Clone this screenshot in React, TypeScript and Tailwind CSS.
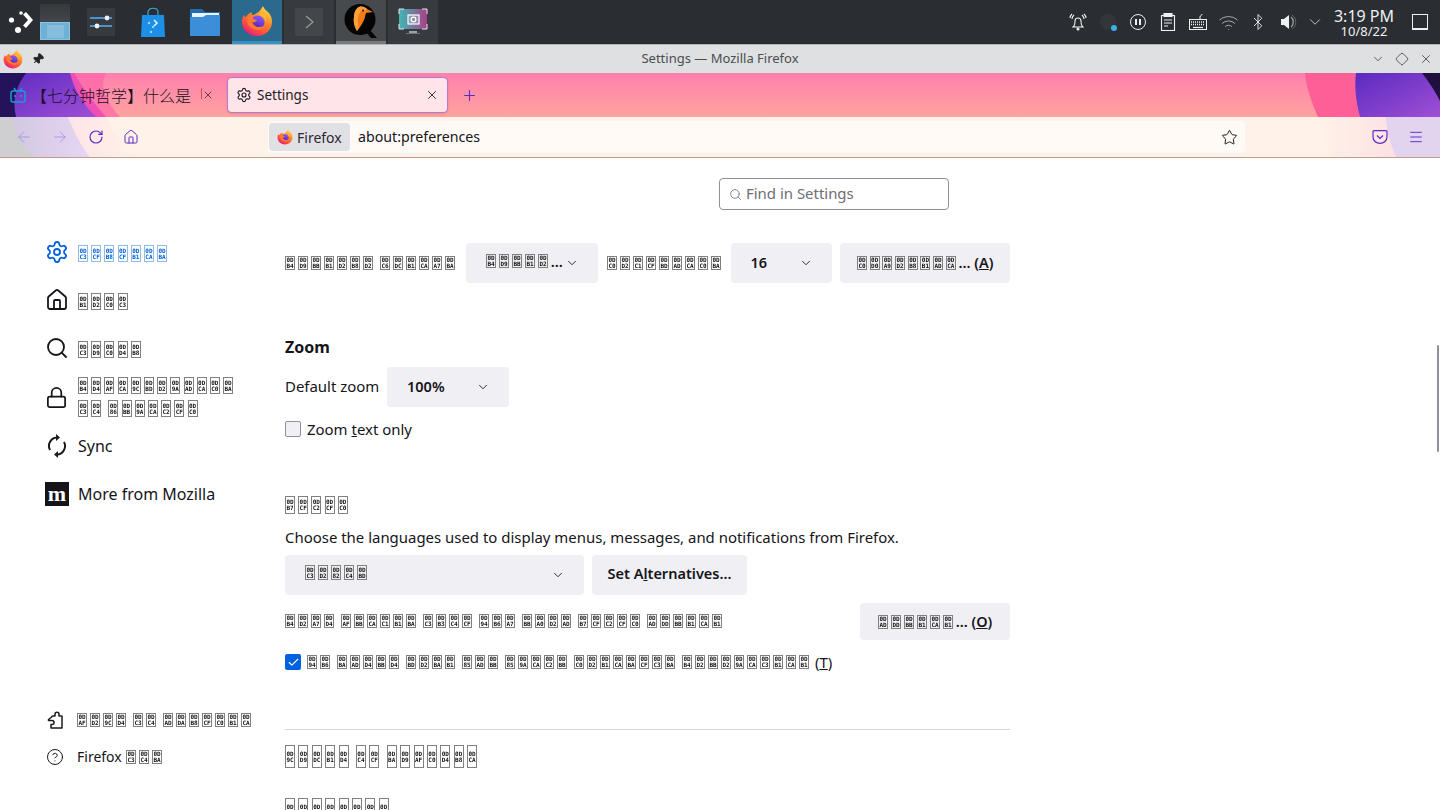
import {
  ArrowLeft,
  ArrowRight,
  Bluetooth,
  Check,
  ChevronDown,
  CircleHelp,
  Diamond,
  Home,
  Lock,
  Menu,
  Pin,
  Plus,
  RotateCw,
  Search,
  Settings,
  Star,
  Wifi,
  X,
} from 'lucide-react';

function FirefoxLogo({ size }: { size: number }) {
  return (
    <svg width={size} height={size} viewBox="0 0 32 32">
      <defs>
        <linearGradient id="ff-body" x1="0.8" y1="0.1" x2="0.25" y2="1">
          <stop offset="0" stopColor="#ffd13d" />
          <stop offset="0.35" stopColor="#ff8a2b" />
          <stop offset="0.7" stopColor="#ff4f3f" />
          <stop offset="1" stopColor="#e31587" />
        </linearGradient>
        <linearGradient id="ff-core" x1="0.7" y1="0" x2="0.3" y2="1">
          <stop offset="0" stopColor="#9059ff" />
          <stop offset="1" stopColor="#4b1fa8" />
        </linearGradient>
      </defs>
      <path
        d="M22 1c1 3 3 4 5 6 3 3 4 6 4 10 0 8-7 14-15 14S1 25 1 17c0-3 1-6 2-7 0 1 1 2 2 2 1-2 3-4 6-5-1 2 0 3 1 3 3-1 7-3 10-9z"
        fill="url(#ff-body)"
      />
      <circle cx="16.5" cy="17.5" r="7" fill="url(#ff-core)" />
      <path
        d="M6 16c1 6 6 9 11 9 5 0 9-4 9-8 0 0-2 5-8 5-4 0-6-3-7-5 2 1 4 0 5-2-3 0-6-3-5-6-3 1-5 4-5 7z"
        fill="#ff7a2e"
      />
      <path d="M20 7c4 2 6 6 5 11-1-4-3-7-7-8z" fill="#ffb52e" />
    </svg>
  );
}

function KickoffIcon() {
  return (
    <svg width="26" height="26" viewBox="0 0 26 26" fill="#fff">
      <circle cx="14" cy="4" r="1.8" />
      <circle cx="4.5" cy="11" r="2.6" />
      <circle cx="11" cy="21" r="3" />
      <path d="M15 4.5l3-2.500 7 8-7 8-3-2.500 5-5.500z" transform="translate(1 1)" />
    </svg>
  );
}

function PagerIcon() {
  return (
    <div className="flex h-[36px] w-[30px] flex-col">
      <div className="h-[18px] bg-gradient-to-b from-[#36393c] to-[#44474a]" />
      <div className="flex h-[18px] justify-center border border-[#8ac4e4] bg-[#6fb0d6]">
        <div className="mt-[2px] h-[13px] w-[17px] bg-[#86bcdc]" />
      </div>
    </div>
  );
}

function SlidersIcon() {
  return (
    <svg width="28" height="28" viewBox="0 0 28 28">
      <rect width="28" height="28" rx="1" fill="#383b3e" />
      <rect x="3" y="9" width="22" height="2" fill="#4a93d0" />
      <rect x="3" y="17" width="22" height="2" fill="#4a93d0" />
      <circle cx="20" cy="10" r="2.400" fill="#f2f2f2" />
      <circle cx="10" cy="18" r="2.400" fill="#f2f2f2" />
    </svg>
  );
}

function DiscoverIcon() {
  return (
    <svg width="26" height="30" viewBox="0 0 26 30">
      <path d="M8 8V5c0-5 10-5 10 0v3" fill="none" stroke="#3fa6d8" strokeWidth="1.200" />
      <path d="M2 8h22l1 22H1z" fill="#1d8fe6" />
      <circle cx="13" cy="20" r="1" fill="#cfeaff" />
      <path d="M14 13l3 3-3 3" fill="none" stroke="#e6f6ff" strokeWidth="1.500" />
      <circle cx="9" cy="16" r="1" fill="#cfeaff" />
      <circle cx="11" cy="25" r="1" fill="#cfeaff" />
    </svg>
  );
}

function FolderIcon() {
  return (
    <svg width="30" height="28" viewBox="0 0 30 28">
      <path d="M0 1h12l3 3h15v24H0z" fill="#1f6cb0" />
      <rect x="2" y="5" width="27" height="5" fill="#eaf3fb" />
      <path d="M0 9h13l3-2h14v21H0z" fill="#3c8ed8" />
    </svg>
  );
}

function TerminalTile() {
  return (
    <svg width="28" height="28" viewBox="0 0 28 28">
      <rect width="28" height="28" rx="1" fill="#43474a" />
      <path d="M11 8l7 6-7 6" fill="none" stroke="#9a9c9e" strokeWidth="1.200" />
    </svg>
  );
}

function QemuIcon() {
  return (
    <svg width="34" height="34" viewBox="0 0 34 34">
      <circle cx="16" cy="15.500" r="15.500" fill="#050505" />
      <path d="M26 26l7 8h-6l-6-7z" fill="#050505" />
      <path
        d="M15 3c3-1 6 0 8 2l6 3-7 1c-1 3-1 6-3 9-2 4-4 6-6 9-2-4-4-8-3-14 0-4 2-9 5-10z"
        fill="#f07a14"
      />
      <path d="M15 3c3-1 6 0 8 2l-2 2c-3-1-5 0-6 3-1 4-2 8 0 13l-2 4c-2-4-4-8-3-14 0-4 2-9 5-10z" fill="#f9a03c" />
      <circle cx="19" cy="6.500" r="1" fill="#111" />
    </svg>
  );
}

function ScreenshotIcon() {
  return (
    <svg width="30" height="28" viewBox="0 0 30 28">
      <defs>
        <linearGradient id="shot-bg" x1="0" y1="0" x2="1" y2="0">
          <stop offset="0" stopColor="#3fb8b4" />
          <stop offset="1" stopColor="#a83f88" />
        </linearGradient>
      </defs>
      <rect x="1" y="1" width="28" height="20" fill="url(#shot-bg)" />
      <rect x="10" y="7" width="11" height="9" fill="#ffffff33" stroke="#fff" strokeWidth="1.200" />
      <circle cx="15.500" cy="11.500" r="2.400" fill="none" stroke="#fff" strokeWidth="1.200" />
      <path d="M1 6V1h5M24 1h5v5M29 16v5h-5M6 21H1v-5" stroke="#e6e6e6" fill="none" />
      <rect x="11" y="23" width="8" height="2" fill="#a0a3a5" />
      <rect x="8" y="25" width="14" height="1" fill="#707376" />
    </svg>
  );
}

function AlarmIcon() {
  return (
    <svg width="18" height="18" viewBox="0 0 18 18" fill="none" stroke="#eff0f1" strokeWidth="1.100">
      <path d="M5 13c1-1 1-3 1-5a3 3 0 0 1 6 0c0 2 0 4 1 5l1 1H4z" />
      <circle cx="9" cy="16" r="1" fill="#eff0f1" />
      <path d="M3 6c0-2 1-3 2-4M1 5c0-1 1-3 2-4M15 6c0-2-1-3-2-4M17 5c0-1-1-3-2-4" />
    </svg>
  );
}

function ClipboardIcon() {
  return (
    <svg width="16" height="18" viewBox="0 0 16 18" fill="none" stroke="#eff0f1" strokeWidth="1.100">
      <rect x="1.500" y="2.500" width="13" height="15" />
      <rect x="4" y="0.500" width="8" height="3" fill="#eff0f1" />
      <path d="M4 7h8M4 10h8M4 13h4" />
    </svg>
  );
}

function KeyboardIcon() {
  return (
    <svg width="20" height="18" viewBox="0 0 20 18" fill="none" stroke="#eff0f1" strokeWidth="1">
      <rect x="1.500" y="6.500" width="17" height="10" />
      <path d="M12 6V4c0-2 2-1 2-3" />
      <path d="M3 9h14M3 11.500h14" strokeDasharray="1 1" strokeWidth="1.400" />
      <path d="M5 14.500h10" strokeWidth="1.200" />
    </svg>
  );
}

function VolumeIcon() {
  return (
    <svg width="17" height="16" viewBox="0 0 17 16">
      <path d="M1 5h3l5-4v14l-5-4H1z" fill="#eff0f1" />
      <path d="M11 3c3 2 3 8 0 10" fill="none" stroke="#a9acaf" strokeWidth="1.200" />
      <path d="M12 1c5 3 5 11 0 14" fill="none" stroke="#5e6266" strokeWidth="1" />
    </svg>
  );
}

function SyncIcon() {
  return (
    <svg width="24" height="24" viewBox="0 0 24 24" fill="none" stroke="#1b1b1f" strokeWidth="2">
      <path d="M5 16a8.500 8.500 0 0 1 7-12.500" />
      <path d="M19 8a8.500 8.500 0 0 1-7 12.500" />
      <path d="M11 0l4 3.500-4 3.500zM13 17l-4 3.500 4 3.500z" fill="#1b1b1f" stroke="none" />
    </svg>
  );
}

function PocketIcon() {
  return (
    <svg width="16" height="16" viewBox="0 0 16 16" fill="none" stroke="#5b2bc8" strokeWidth="1.200">
      <path d="M2 1.700h12c.6 0 1 .4 1 1V8c0 3.500-3 6.300-7 6.300S1 11.500 1 8V2.700c0-.6.4-1 1-1z" />
      <path d="M5 6.500l3 3 3-3" />
    </svg>
  );
}

function PuzzleIcon() {
  return (
    <svg width="18" height="18" viewBox="0 0 18 18" fill="none" stroke="#1b1b1f" strokeWidth="1.500" strokeLinejoin="round">
      <path d="M6.500 5H9V3.300a2 2 0 0 1 4 0V5h3v12H5v-3.500h1a2 2 0 0 0 0-4H2.500V8.500L5 6.500z" />
    </svg>
  );
}

function BiliIcon() {
  return (
    <svg width="16" height="16" viewBox="0 0 16 16" fill="none" stroke="#1a9ad6" strokeWidth="1.500">
      <rect x="1" y="4" width="14" height="11" rx="2" />
      <path d="M4 1l2 3M12 1l-2 3M5 8v2M11 8v2" />
    </svg>
  );
}

// Sinhala text has no font on the reference machine, so each code point shows as a hex box
function Tofu({
  text,
  h = 'h-[14px]',
  gap = 'mr-[3px]',
  blue,
}: {
  text: string;
  h?: string;
  gap?: string;
  blue?: boolean;
}) {
  return (
    <span aria-label={text} className="inline-flex items-center align-middle will-change-transform">
      {Array.from(text).map((ch, i) => {
        if (ch === ' ') return <span key={i} className="w-[4px]" />;
        const code = ch.codePointAt(0)!.toString(16).toUpperCase().padStart(4, '0');
        return (
          <span
            key={i}
            className={`flex w-[10px] shrink-0 flex-col items-center justify-center border font-['DejaVu_Sans_Mono',monospace] text-[6px] leading-[6px] font-bold ${h} ${gap} ${
              blue ? 'border-[#8fbce8] text-[#0061e0]' : 'border-[#808080] text-[#111111]'
            }`}
          >
            <span>{code.slice(0, 2)}</span>
            <span>{code.slice(2)}</span>
          </span>
        );
      })}
    </span>
  );
}

function TrayItem({ children, w = 'w-[30px]' }: { children: React.ReactNode; w?: string }) {
  return <div className={`flex h-full items-center justify-center ${w}`}>{children}</div>;
}

function Panel() {
  return (
    <div className="flex h-[45px] shrink-0 items-center border-b border-[#b4b6b8] bg-[#2a2e32]">
      <div className="flex h-full w-[40px] items-center justify-center">
        <KickoffIcon />
      </div>
      <div className="mr-[6px] flex h-full w-[30px] items-center">
        <PagerIcon />
      </div>
      <div className="flex h-full gap-[2px]">
        <div className="flex h-full w-[50px] items-center justify-center"><SlidersIcon /></div>
        <div className="flex h-full w-[50px] items-center justify-center"><DiscoverIcon /></div>
        <div className="flex h-full w-[50px] items-center justify-center"><FolderIcon /></div>
        <div className="flex h-full w-[50px] items-center justify-center border-b-[3px] border-[#3a8fc4] bg-[#2b6a8c]">
          <FirefoxLogo size={32} />
        </div>
        <div className="flex h-full w-[50px] items-center justify-center bg-[#373b3f]"><TerminalTile /></div>
        <div className="flex h-full w-[50px] items-center justify-center border-b-[3px] border-[#787a7c] bg-[#474a4d]">
          <QemuIcon />
        </div>
        <div className="flex h-full w-[50px] items-center justify-center bg-[#373b3f]"><ScreenshotIcon /></div>
      </div>
      <div className="ml-auto flex h-full items-center text-[#eff0f1]">
        <TrayItem><AlarmIcon /></TrayItem>
        <TrayItem>
          <div className="relative h-[16px] w-[16px] rounded-full bg-[#32363a]">
            <div className="absolute right-[-1px] bottom-[-1px] h-[6px] w-[6px] rounded-full bg-[#3daee9]" />
          </div>
        </TrayItem>
        <TrayItem>
          <div className="flex h-[16px] w-[16px] items-center justify-center gap-[2px] rounded-full border border-[#eff0f1]">
            <div className="h-[6px] w-[2px] bg-[#eff0f1]" />
            <div className="h-[6px] w-[2px] bg-[#eff0f1]" />
          </div>
        </TrayItem>
        <TrayItem><ClipboardIcon /></TrayItem>
        <TrayItem><KeyboardIcon /></TrayItem>
        <TrayItem><Wifi size={21} strokeWidth={1} className="text-[#b9bbbd]" /></TrayItem>
        <TrayItem><Bluetooth size={18} strokeWidth={1.200} /></TrayItem>
        <TrayItem><VolumeIcon /></TrayItem>
        <TrayItem w="w-[24px]"><ChevronDown size={18} strokeWidth={1} /></TrayItem>
        <div className="ml-[2px] flex w-[70px] flex-col items-center font-['Noto_Sans',sans-serif] text-[#eff0f1]">
          <span className="text-[16px] leading-[18px]">3:19 PM</span>
          <span className="text-[13px] leading-[13px]">10/8/22</span>
        </div>
        <div className="flex w-[41px] items-center justify-center">
          <div className="h-[16px] w-[16px] border border-b-2 border-[#eff0f1]" />
        </div>
      </div>
    </div>
  );
}

function TitleBar() {
  return (
    <div className="flex h-[28px] shrink-0 items-center bg-[#dee0e2]">
      <div className="flex w-[76px] items-center">
        <div className="ml-[3px] mr-[9px]"><FirefoxLogo size={20} /></div>
        <Pin size={12} className="rotate-45 fill-[#232629] text-[#232629]" />
      </div>
      <div className="flex-1 text-center font-['Noto_Sans',sans-serif] text-[13px] text-[#4b4e51]">
        Settings — Mozilla Firefox
      </div>
      <div className="flex w-[76px] items-center justify-end gap-[10px] pr-[7px] text-[#232629]">
        <ChevronDown size={14} strokeWidth={1.200} />
        <Diamond size={14} strokeWidth={1.200} />
        <X size={14} strokeWidth={1.200} />
      </div>
    </div>
  );
}

function TabStrip() {
  return (
    <div className="relative flex h-[44px] shrink-0 items-center bg-gradient-to-b from-[#ff7fae] to-[#ffa39f]">
      <svg className="absolute inset-0" width="1440" height="44" viewBox="0 0 1440 44">
        <defs>
          <linearGradient id="tab-purple" x1="0" y1="0" x2="1" y2="1">
            <stop offset="0" stopColor="#5a2ac0" />
            <stop offset="1" stopColor="#a04fd6" />
          </linearGradient>
        </defs>
        <path d="M0 0h106c-8 14 2 30 14 44H0z" fill="#ff5fa8" opacity="0.6" />
        <path d="M0 0h74c8 14 20 30 32 44H0z" fill="#ee4fb2" />
        <path d="M0 0h70c4 16 12 30 26 44H10z" fill="url(#tab-purple)" />
        <path d="M0 0h26c-10 14-14 26-10 44H0z" fill="#24125a" />
        <path d="M1305 0h51c-2 16 0 30 4 44h-42c-6-14-12-30-13-44z" fill="#ff5f97" />
        <path d="M1356 0h84v44h-80c-4-14-6-30-4-44z" fill="url(#tab-purple)" />
        <path d="M1422 0h18v28c-6-12-12-20-18-28z" fill="#1f1040" />
      </svg>
      <div className="relative ml-[8px] flex h-[34px] w-[212px] items-center">
        <div className="ml-[2px] mr-[5px]"><BiliIcon /></div>
        <span className="w-[171px] shrink-0 overflow-hidden whitespace-nowrap font-['Noto_Sans_CJK_SC',sans-serif] text-[16px] font-light text-[#1a0f1e]">
          【七分钟哲学】什么是「
        </span>
        <X size={12} strokeWidth={1.500} className="text-[#2b2030]" />
      </div>
      <div className="relative ml-[8px] flex h-[34px] w-[219px] items-center rounded-[4px] bg-[#ffe4ea] pl-[8px] pr-[8px] shadow-[0_0_0_1px_#b977cf,0_1px_3px_#00000040]">
        <Settings size={16} strokeWidth={1.700} className="text-[#1c1b22]" />
        <span className="ml-[5px] font-['Noto_Sans',sans-serif] text-[13.500px] text-[#1c1b22]">Settings</span>
        <X size={14} strokeWidth={1.500} className="ml-auto text-[#1c1b22]" />
      </div>
      <Plus size={17} strokeWidth={1.500} className="relative ml-[14px] text-[#5b2bc8]" />
    </div>
  );
}

function NavBar() {
  return (
    <div className="relative flex h-[41px] shrink-0 items-center border-b border-[#c79a86] bg-[#fff2e9]">
      <svg className="absolute inset-0" width="1440" height="40" viewBox="0 0 1440 40">
        <defs>
          <linearGradient id="nav-left" x1="0" y1="0" x2="1" y2="0">
            <stop offset="0" stopColor="#cfc6dc" />
            <stop offset="1" stopColor="#e6d6f6" />
          </linearGradient>
          <linearGradient id="nav-pale" x1="0" y1="0" x2="1" y2="0">
            <stop offset="0" stopColor="#ffd4e2" />
            <stop offset="1" stopColor="#fff2e9" />
          </linearGradient>
          <linearGradient id="nav-right" x1="0" y1="0" x2="1" y2="0">
            <stop offset="0" stopColor="#fff2e9" />
            <stop offset="1" stopColor="#fbd8de" />
          </linearGradient>
        </defs>
        <path d="M0 0h105c8 14 18 28 30 40H0z" fill="url(#nav-pale)" />
        <path d="M0 0h68c6 14 12 28 22 40H0z" fill="url(#nav-left)" />
        <path d="M0 0h12c2 14 10 28 22 40H0z" fill="#cfcfd2" />
        <path d="M1318 0h122v40h-110c-6-14-10-28-12-40z" fill="url(#nav-right)" />
        <path d="M1386 0h54v40h-44c-6-14-10-28-10-40z" fill="#e2d3ee" />
      </svg>
      <div className="relative flex items-center pl-[15px]">
        <ArrowLeft size={18} strokeWidth={1.200} className="text-[#a794dc]" />
        <ArrowRight size={18} strokeWidth={1.200} className="ml-[18px] text-[#a794dc]" />
        <RotateCw size={16} strokeWidth={1.700} className="ml-[19px] text-[#5b2bc8]" />
        <Home size={16} strokeWidth={1.500} className="ml-[19px] text-[#5b2bc8]" />
      </div>
      <div className="relative ml-[129px] flex h-[32px] w-[977px] items-center rounded-[4px] bg-[#fffaf6] pl-[1px]">
        <div className="flex h-[28px] w-[81px] items-center rounded-[4px] bg-[#e1e0e5] pl-[8px]">
          <FirefoxLogo size={16} />
          <span className="ml-[4px] font-['Noto_Sans',sans-serif] text-[14px] text-[#2a2833]">Firefox</span>
        </div>
        <span className="ml-[8px] font-['Noto_Sans',sans-serif] text-[14.200px] text-[#15141a]">about:preferences</span>
        <Star size={17} strokeWidth={1.400} className="ml-auto mr-[7px] text-[#1c1b22]" />
      </div>
      <div className="relative ml-auto flex items-center gap-[20px] pr-[16px]">
        <PocketIcon />
        <Menu size={16} strokeWidth={1.400} className="text-[#5b2bc8]" />
      </div>
    </div>
  );
}

function SideItem({ icon, children, active }: { icon: React.ReactNode; children: React.ReactNode; active?: boolean }) {
  return (
    <div className={`flex items-center ${active ? 'text-[#0061e0]' : 'text-[#15141a]'}`}>
      <div className="flex w-[33px] shrink-0 items-center">{icon}</div>
      <div className="text-[16px] leading-[24px]">{children}</div>
    </div>
  );
}

function Sidebar() {
  return (
    <div className="flex w-[285px] shrink-0 flex-col pl-[45px] pt-[70px] font-['Noto_Sans',sans-serif]">
      <div className="flex h-[48px] items-center">
        <SideItem active icon={<Settings size={24} strokeWidth={1.800} />}>
          <Tofu text="සාමාන්ය" h="h-[17px]" gap="mr-[3.200px]" blue />
        </SideItem>
      </div>
      <div className="flex h-[48px] items-center">
        <SideItem icon={<Home size={24} strokeWidth={1.800} />}>
          <Tofu text="නිවස" h="h-[17px]" gap="mr-[3.200px]" />
        </SideItem>
      </div>
      <div className="flex h-[48px] items-center">
        <SideItem icon={<Search size={24} strokeWidth={1.800} />}>
          <Tofu text="සෙවුම" h="h-[17px]" gap="mr-[3.200px]" />
        </SideItem>
      </div>
      <div className="flex h-[50px] items-center">
        <SideItem icon={<Lock size={23} strokeWidth={1.800} />}>
          <div className="flex flex-col gap-[6px]">
            <Tofu text="පුද්ගලිකත්වය" h="h-[17px]" gap="mr-[3.200px]" />
            <Tofu text="සහ ආරක්ෂාව" h="h-[17px]" gap="mr-[3.200px]" />
          </div>
        </SideItem>
      </div>
      <div className="flex h-[48px] items-center">
        <SideItem icon={<SyncIcon />}>Sync</SideItem>
      </div>
      <div className="flex h-[48px] items-center">
        <SideItem
          icon={
            <div className="flex h-[24px] w-[24px] items-center justify-center bg-[#15141a] font-['Liberation_Serif',serif] text-[22px] leading-none font-bold text-white">
              m
            </div>
          }
        >
          More from Mozilla
        </SideItem>
      </div>
      <div className="mt-[184px] flex h-[36px] items-center text-[14px] text-[#15141a]">
        <div className="flex w-[32px] justify-center pr-[12px]">
          <PuzzleIcon />
        </div>
        <Tofu text="දිගු සහ තේමාවන්" />
      </div>
      <div className="flex h-[37px] items-center text-[14px] text-[#15141a]">
        <div className="flex w-[32px] justify-center pr-[12px]">
          <CircleHelp size={18} strokeWidth={1.300} />
        </div>
        <span>Firefox</span>
        <span className="ml-[4px] pb-[3px]">
          <Tofu text="සහය" />
        </span>
      </div>
    </div>
  );
}

function SelectBox({ children, w, pl = 'pl-[20px]' }: { children: React.ReactNode; w: string; pl?: string }) {
  return (
    <div className={`flex h-[40px] items-center justify-between rounded-[4px] bg-[#f0f0f4] pr-[19px] text-[14.500px] font-semibold text-[#15141a] ${w} ${pl}`}>
      <span className="flex items-center">{children}</span>
      <ChevronDown size={14} strokeWidth={1.500} />
    </div>
  );
}

function MainPane() {
  return (
    <div className="w-[725px] pt-[20px] font-['Noto_Sans',sans-serif] text-[14.950px] text-[#15141a]">
      <div className="ml-[434px] flex h-[32px] w-[230px] items-center rounded-[4px] border border-[#8f8f9d] pl-[9px] text-[#6e6e73]">
        <Search size={13} strokeWidth={1.500} />
        <span className="ml-[4px] pb-[2px]">Find in Settings</span>
      </div>

      <div className="mt-[33px] flex h-[40px] items-center">
        <div className="w-[181px] pb-[4px]"><Tofu text="පෙරනිමි ෆොන්ටය" /></div>
        <SelectBox w="w-[132px]">
          <span className="flex items-end pb-[4px]">
            <Tofu text="පෙරනි" />
            <span className="leading-[14px]">...</span>
          </span>
        </SelectBox>
        <div className="ml-[9px] w-[125px] pb-[4px]"><Tofu text="විශාලත්වය" /></div>
        <SelectBox w="w-[101px]" pl="pl-[19px]">16</SelectBox>
        <div className="ml-[8px] flex h-[40px] w-[170px] items-center justify-center rounded-[4px] bg-[#f0f0f4] text-[14.500px] font-semibold">
          <span className="flex items-center">
            <Tofu text="වැඩිමනත්" gap="mr-[2.700px]" />
            <span>... (<u>A</u>)</span>
          </span>
        </div>
      </div>

      <h2 className="mt-[52px] text-[16px] leading-[24px] font-bold">Zoom</h2>
      <div className="mt-[8px] flex h-[40px] items-center">
        <span className="w-[102px] pb-[2px]">Default zoom</span>
        <SelectBox w="w-[122px]">100%</SelectBox>
      </div>
      <div className="mt-[14px] flex h-[16px] items-center">
        <div className="h-[16px] w-[16px] rounded-[2px] border border-[#8f8f9d] bg-[#f0f0f4]" />
        <span className="ml-[6px]">Zoom <u>t</u>ext only</span>
      </div>

      <div className="mt-[56px] flex h-[24px] items-center">
        <Tofu text="භාෂාව" h="h-[18px]" gap="mr-[3.200px]" />
      </div>
      <p className="mt-[10px] leading-[20px]">Choose the languages used to display menus, messages, and notifications from Firefox.</p>
      <div className="mt-[8px] flex items-center">
        <SelectBox w="w-[299px]">
          <span className="pb-[8px]"><Tofu text="සිංහල" h="h-[15px]" /></span>
        </SelectBox>
        <div className="ml-[8px] flex h-[40px] w-[155px] items-center justify-center rounded-[4px] bg-[#f0f0f4] pb-[2px] text-[14.500px] font-semibold">
          <span>Set A<u>l</u>ternatives...</span>
        </div>
      </div>
      <div className="mt-[8px] flex h-[37px] items-center justify-between">
        <div className="pb-[4px]"><Tofu text="පිටු දර්ශනය සඳහා ඔබට රචිත භාෂාව තෝරන්න" /></div>
        <div className="flex h-[37px] w-[150px] items-center justify-center rounded-[4px] bg-[#f0f0f4] text-[14.500px] font-semibold">
          <span className="flex items-center">
            <Tofu text="තෝරන්න" />
            <span>... (<u>O</u>)</span>
          </span>
        </div>
      </div>
      <div className="mt-[14px] flex h-[16px] items-center">
        <div className="flex h-[16px] w-[16px] items-center justify-center rounded-[2px] bg-[#0061e0]">
          <Check size={13} strokeWidth={2} className="text-white" />
        </div>
        <div className="ml-[6px] flex items-center whitespace-nowrap">
          <span className="pb-[4px]"><Tofu text="ඔබ යතුරු ලියන අතර අක්ෂර වින්යාසය පිරික්සන්න" /></span>
          <span className="ml-[3px]">(<u>T</u>)</span>
        </div>
      </div>

      <hr className="mt-[59px] border-[#d7d7db]" />

      <div className="mt-[15px] flex h-[23px] items-center">
        <Tofu text="ගෙොනු හා යෙදවුම්" h="h-[23px]" gap="mr-[3.400px]" />
      </div>
      <div className="mt-[30px] flex h-[23px] items-center">
        <Tofu text="බාගැනීම්" h="h-[23px]" gap="mr-[3.400px]" />
      </div>
    </div>
  );
}

export default function App() {
  return (
    <div className="flex h-[810px] w-[1440px] flex-col overflow-hidden bg-white">
      <Panel />
      <TitleBar />
      <TabStrip />
      <NavBar />
      <div className="relative flex flex-1 overflow-hidden">
        <Sidebar />
        <MainPane />
        <div className="absolute top-[187px] right-[1px] h-[107px] w-[2px] rounded-full bg-[#8f8f9d]" />
      </div>
    </div>
  );
}
